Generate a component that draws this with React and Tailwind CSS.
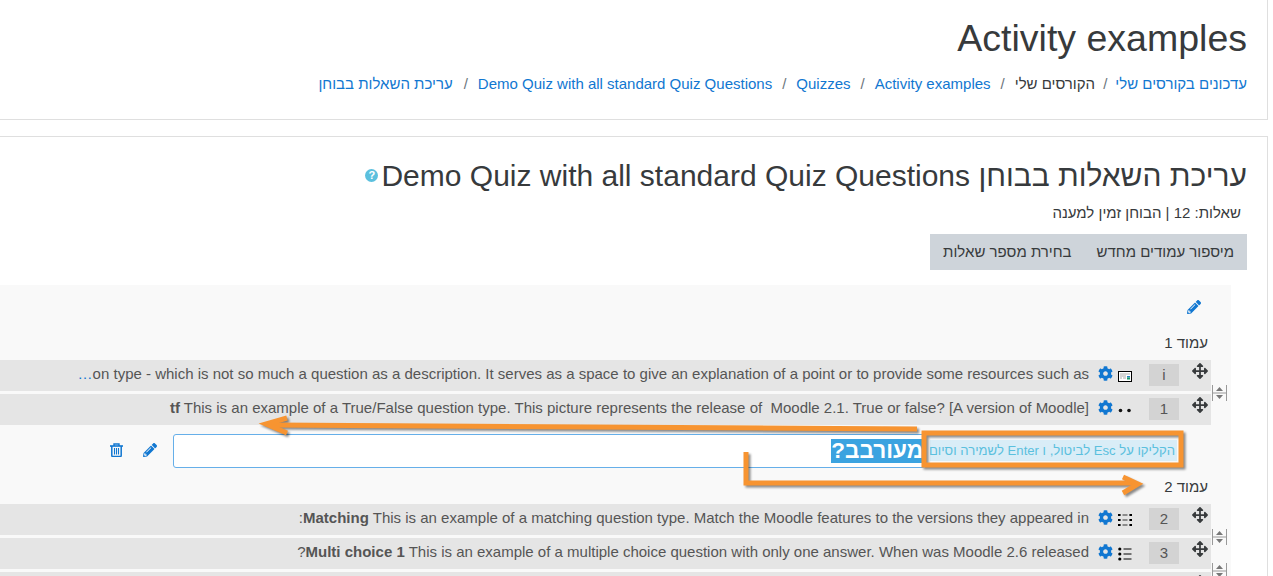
import React from 'react';
import { FaArrowsAlt, FaCog, FaPencilAlt } from 'react-icons/fa';

const DescriptionIcon = () => (
  <svg width="14" height="11" viewBox="0 0 14 11" className="block">
    <rect x="0.5" y="0.5" width="13" height="10" fill="#fff" stroke="#000" />
    <path d="M2 3h10M2 5h6M2 7h2M5 7h3" stroke="#aaa" />
    <rect x="9" y="5" width="3" height="1.5" fill="#2a7fc0" />
    <rect x="9" y="6.5" width="3" height="2" fill="#1a9a6a" />
  </svg>
);

const TrueFalseIcon = () => (
  <svg width="14" height="14" viewBox="0 0 14 14" className="block">
    <circle cx="2.5" cy="7.5" r="1.8" fill="#111" />
    <circle cx="11" cy="7.5" r="1.8" fill="#111" />
  </svg>
);

const MatchingIcon = () => (
  <svg width="14" height="16" viewBox="0 0 14 16" className="block">
    <path d="M0 3h2.6M0 8h2.6M0 13h2.6M11.4 3h2.6M11.4 8h2.6M11.4 13h2.6" stroke="#000" strokeWidth="2.2" />
    <path d="M4.5 3h5M4.5 8h5M4.5 13h5" stroke="#333" />
  </svg>
);

const MultiChoiceIcon = () => (
  <svg width="14" height="16" viewBox="0 0 14 16" className="block">
    <circle cx="1.8" cy="3" r="1.6" fill="#000" />
    <circle cx="1.8" cy="8" r="1.6" fill="#000" />
    <circle cx="1.8" cy="13" r="1.6" fill="#000" />
    <path d="M5.5 3h8M5.5 8h8M5.5 13h8" stroke="#000" />
  </svg>
);

const TrashIcon = () => (
  <svg width="13" height="14" viewBox="0 0 13 14" fill="none" className="mt-[9px] mr-5 block shrink-0">
    <path d="M0 3h13" stroke="#1177d1" strokeWidth="1.6" />
    <path d="M4 3V1h5v2" stroke="#1177d1" strokeWidth="1.4" />
    <path d="M1.8 3v9.5a1 1 0 0 0 1 1h7.4a1 1 0 0 0 1-1V3" stroke="#1177d1" strokeWidth="1.5" />
    <path d="M4.5 5v6.5M6.5 5v6.5M8.5 5v6.5" stroke="#1177d1" strokeWidth="1.1" />
  </svg>
);

// page break toggle between two question rows
const BreakIcon = () => (
  <svg width="15" height="16" viewBox="0 0 15 16" className="absolute right-[-16px] bottom-[-10px] block">
    <path d="M0.5 0v16M14.5 0v16M1 8h13" stroke="#999" fill="none" />
    <path d="M7.5 2l3.5 4h-7zM7.5 14l3.5-4h-7z" fill="#777" />
  </svg>
);

const QuestionRow = ({ number, icon, breakAfter, children }) => (
  <div className="relative flex h-[31px] mb-[3px] items-start bg-[#e5e5e5] pr-[3px] pl-[78px] shrink-0">
    <FaArrowsAlt className="mt-[3px] w-4 h-4 text-[#373a3c] shrink-0" />
    <div className="mt-1 mr-[13px] flex w-[30px] h-[22px] items-center justify-center bg-[#d3d3d3] text-[#555] text-[15px] shrink-0">
      {number}
    </div>
    <div className="mt-[9px] mr-[17px] w-[14px] h-[14px] flex items-center shrink-0">{icon}</div>
    <FaCog className="mt-[6px] mr-[5px] w-[15px] h-[15px] text-[#1177d1] shrink-0" />
    <div className="mt-[3px] mr-[9px] min-w-0 flex-1 truncate text-[15px] leading-[22px] text-[#1177d1]">
      <span className="text-[#555]">{children}</span>
    </div>
    {breakAfter && <BreakIcon />}
  </div>
);

const PageLabel = ({ children, className }) => (
  <div className={`h-5 pr-[3px] text-[15px] leading-[22px] text-[#373a3c] ${className}`}>{children}</div>
);

const Crumb = ({ children, plain }) => (
  <span className={plain ? 'text-[#373a3c]' : 'text-[#1177d1]'}>{children}</span>
);

const Sep = ({ wide }) => <span className={`${wide ? 'mx-[10px]' : 'mx-2'} text-[#6c757d]`}>/</span>;

export default function App() {
  return (
    <div
      dir="rtl"
      className="relative w-[1273px] h-[576px] overflow-hidden bg-white text-[15px] text-[#373a3c]"
      style={{ fontFamily: '"Liberation Sans", Arial, sans-serif' }}
    >
      <div className="mr-[5px] w-[1268px] h-[120px] border-r border-b border-[#dfdfdf] pt-4 pr-5">
        <h1 className="text-[37.5px] leading-[45px] font-normal">Activity examples</h1>
        <div className="mt-[11px] flex leading-[23px]">
          <Crumb>עדכונים בקורסים שלי</Crumb>
          <Sep />
          <Crumb plain>הקורסים שלי</Crumb>
          <Sep wide />
          <Crumb>Activity examples</Crumb>
          <Sep wide />
          <Crumb>Quizzes</Crumb>
          <Sep wide />
          <Crumb>Demo Quiz with all standard Quiz Questions</Crumb>
          <Sep wide />
          <span className="mr-px text-[#1177d1]">עריכת השאלות בבוחן</span>
        </div>
      </div>

      <div className="mt-4 mr-[5px] w-[1268px] h-[440px] border-t border-r border-[#dfdfdf]">
        <div className="pr-5 pt-[21px]">
          <h2 className="text-[30px] leading-9 font-normal">
            עריכת השאלות בבוחן Demo Quiz with all standard Quiz Questions
            <span className="inline-flex w-[13px] h-[13px] mr-[3px] items-center justify-center rounded-full bg-[#5bc0de] text-white text-[11px] font-bold leading-none align-[7px]">
              ?
            </span>
          </h2>
          <div className="mt-2 pr-[6px] leading-[22px]">שאלות: 12 | הבוחן זמין למענה</div>
          <div className="mt-[10px] flex">
            <button className="h-9 pr-[13px] pl-3 bg-[#ced4da] text-[15px]">מיספור עמודים מחדש</button>
            <button className="h-9 px-[13px] bg-[#ced4da] text-[15px]">בחירת מספר שאלות</button>
          </div>
        </div>

        <div className="mt-[15px] mr-[36px] w-[1232px] h-[291px] bg-[#f9f9f9] pr-5 pt-[14px]">
          <div className="flex h-[33px] pr-[10px]">
            <FaPencilAlt className="mt-px w-[14px] h-[14px] text-[#1177d1]" />
          </div>
          <PageLabel className="mb-2">עמוד 1</PageLabel>
          <QuestionRow number="i" icon={<DescriptionIcon />} breakAfter>
            <b>Description</b> This is an example of a description question type - which is not so much a question as a description. It serves as a space to give an explanation of a point or to provide some resources such as
          </QuestionRow>
          <div className="mb-[-3px]">
            <QuestionRow number="1" icon={<TrueFalseIcon />}>
              <b>tf</b> This is an example of a True/False question type. This picture represents the release of {'\u00a0'}Moodle 2.1. True or false? [A version of Moodle]
            </QuestionRow>
          </div>
          <div className="flex h-[51px] pt-[9px] pr-[34px] pl-[110px] mt-[3px] items-start">
            <div className="mt-[6px] w-[247px] h-[21px] bg-[#d9edf7] pr-[2px] text-[#5bc0de] text-[13.125px] leading-[21px] whitespace-nowrap overflow-hidden shrink-0">
              הקליקו על Esc לביטול, ו Enter לשמירה וסיום
            </div>
            <div className="mr-[5px] w-[752px] h-[34px] border border-[#66afe9] rounded-[3px] bg-white shrink-0">
              <span className="inline-block bg-[#3ba3e0] text-white text-[22.5px] font-bold leading-6 mt-1 mr-[1px]">
                מעורבב?
              </span>
            </div>
            <FaPencilAlt className="mt-[9px] mr-4 w-[14px] h-[14px] text-[#1177d1] shrink-0" />
            <TrashIcon />
          </div>
          <PageLabel className="mb-2">עמוד 2</PageLabel>
          <QuestionRow number="2" icon={<MatchingIcon />} breakAfter>
            <b>Matching</b> This is an example of a matching question type. Match the Moodle features to the versions they appeared in:
          </QuestionRow>
          <QuestionRow number="3" icon={<MultiChoiceIcon />} breakAfter>
            <b>Multi choice 1</b> This is an example of a multiple choice question with only one answer. When was Moodle 2.6 released?
          </QuestionRow>
          <QuestionRow />
        </div>
      </div>

      {/* orange annotations drawn over the screenshot */}
      <svg
        width="1273"
        height="576"
        viewBox="0 0 1273 576"
        fill="none"
        className="absolute left-0 top-0 pointer-events-none drop-shadow-[2px_2px_1px_rgba(0,0,0,0.45)]"
      >
        <g stroke="#f79431">
          <rect x="924" y="433" width="257" height="32" strokeWidth="5" />
          <path d="M917 429L270 425" strokeWidth="5" />
          <path d="M287 418L266 424L287 433" strokeWidth="5" />
          <path d="M746 452V483H1134" strokeWidth="5" />
          <path d="M1123 477L1138 484L1123 493" strokeWidth="5" />
        </g>
      </svg>
    </div>
  );
}
